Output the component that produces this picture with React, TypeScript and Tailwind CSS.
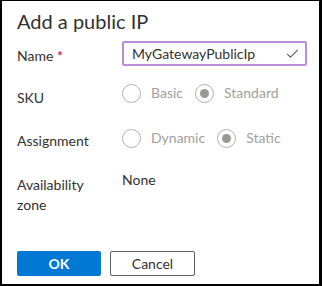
import React from "react";

const font = { fontFamily: 'Lato, "Open Sans", sans-serif' };

function Radio({ checked, label }: { checked?: boolean; label: string }) {
  return (
    <div className="flex items-center h-[20px]">
      <span className="w-[19px] h-[19px] rounded-full border border-[#b3b0ad] flex items-center justify-center">
        {checked && <span className="w-[9px] h-[9px] rounded-full bg-[#9a9896]" />}
      </span>
      <span className="ml-[10px] text-[14px] leading-[20px] text-[#a19f9d]">{label}</span>
    </div>
  );
}

export default function App() {
  return (
    <div
      className="w-[322px] h-[286px] bg-white border-l-2 border-t border-r-[3px] border-b-2 border-black text-[#323130] flex flex-col pl-[15px]"
      style={font}
    >
      <div className="text-[20px] leading-[28px] mt-[6px] h-[28px]">Add a public IP</div>
      <div className="flex items-start mt-[6px] h-[25px]">
        <div className="w-[105px] text-[14px] leading-[20px] pt-[5px]">
          Name <span className="text-[#c4314b] font-bold">*</span>
        </div>
        <div className="w-[185px] h-[25px] border-2 border-[#b98ddc] rounded-[2px] flex items-center justify-between pl-[8px] pr-[6px]">
          <span className="text-[14px] leading-[20px]">MyGatewayPublicIp</span>
          <svg width="13" height="13" viewBox="0 0 16 16" fill="none" stroke="#605e5c" strokeWidth="1.4">
            <path d="M1.5 8.5 L5.5 12.5 L14.5 3.5" />
          </svg>
        </div>
      </div>
      <div className="flex items-start mt-[17px] h-[25px]">
        <div className="w-[105px] text-[14px] leading-[20px] pt-[5px]">SKU</div>
        <div className="flex gap-[12px]">
          <Radio label="Basic" />
          <Radio checked label="Standard" />
        </div>
      </div>
      <div className="flex items-start mt-[20px] h-[25px]">
        <div className="w-[105px] text-[14px] leading-[20px] pt-[3px]">Assignment</div>
        <div className="flex gap-[12px]">
          <Radio label="Dynamic" />
          <Radio checked label="Static" />
        </div>
      </div>
      <div className="flex items-start mt-[17px] h-[45px]">
        <div className="w-[105px] text-[14px] leading-[20px] pt-[5px]">
          Availability
          <br />
          zone
        </div>
        <div className="text-[14px] leading-[20px]">None</div>
      </div>
      <div className="flex gap-[9px] mt-[36px]">
        <button className="w-[84px] h-[25px] bg-[#0078d4] rounded-[2px] text-white text-[14px] font-bold flex items-center justify-center">
          OK
        </button>
        <button className="w-[85px] h-[25px] border border-[#605e5c] rounded-[2px] text-[#323130] text-[14px] bg-white flex items-center justify-center">
          Cancel
        </button>
      </div>
    </div>
  );
}
